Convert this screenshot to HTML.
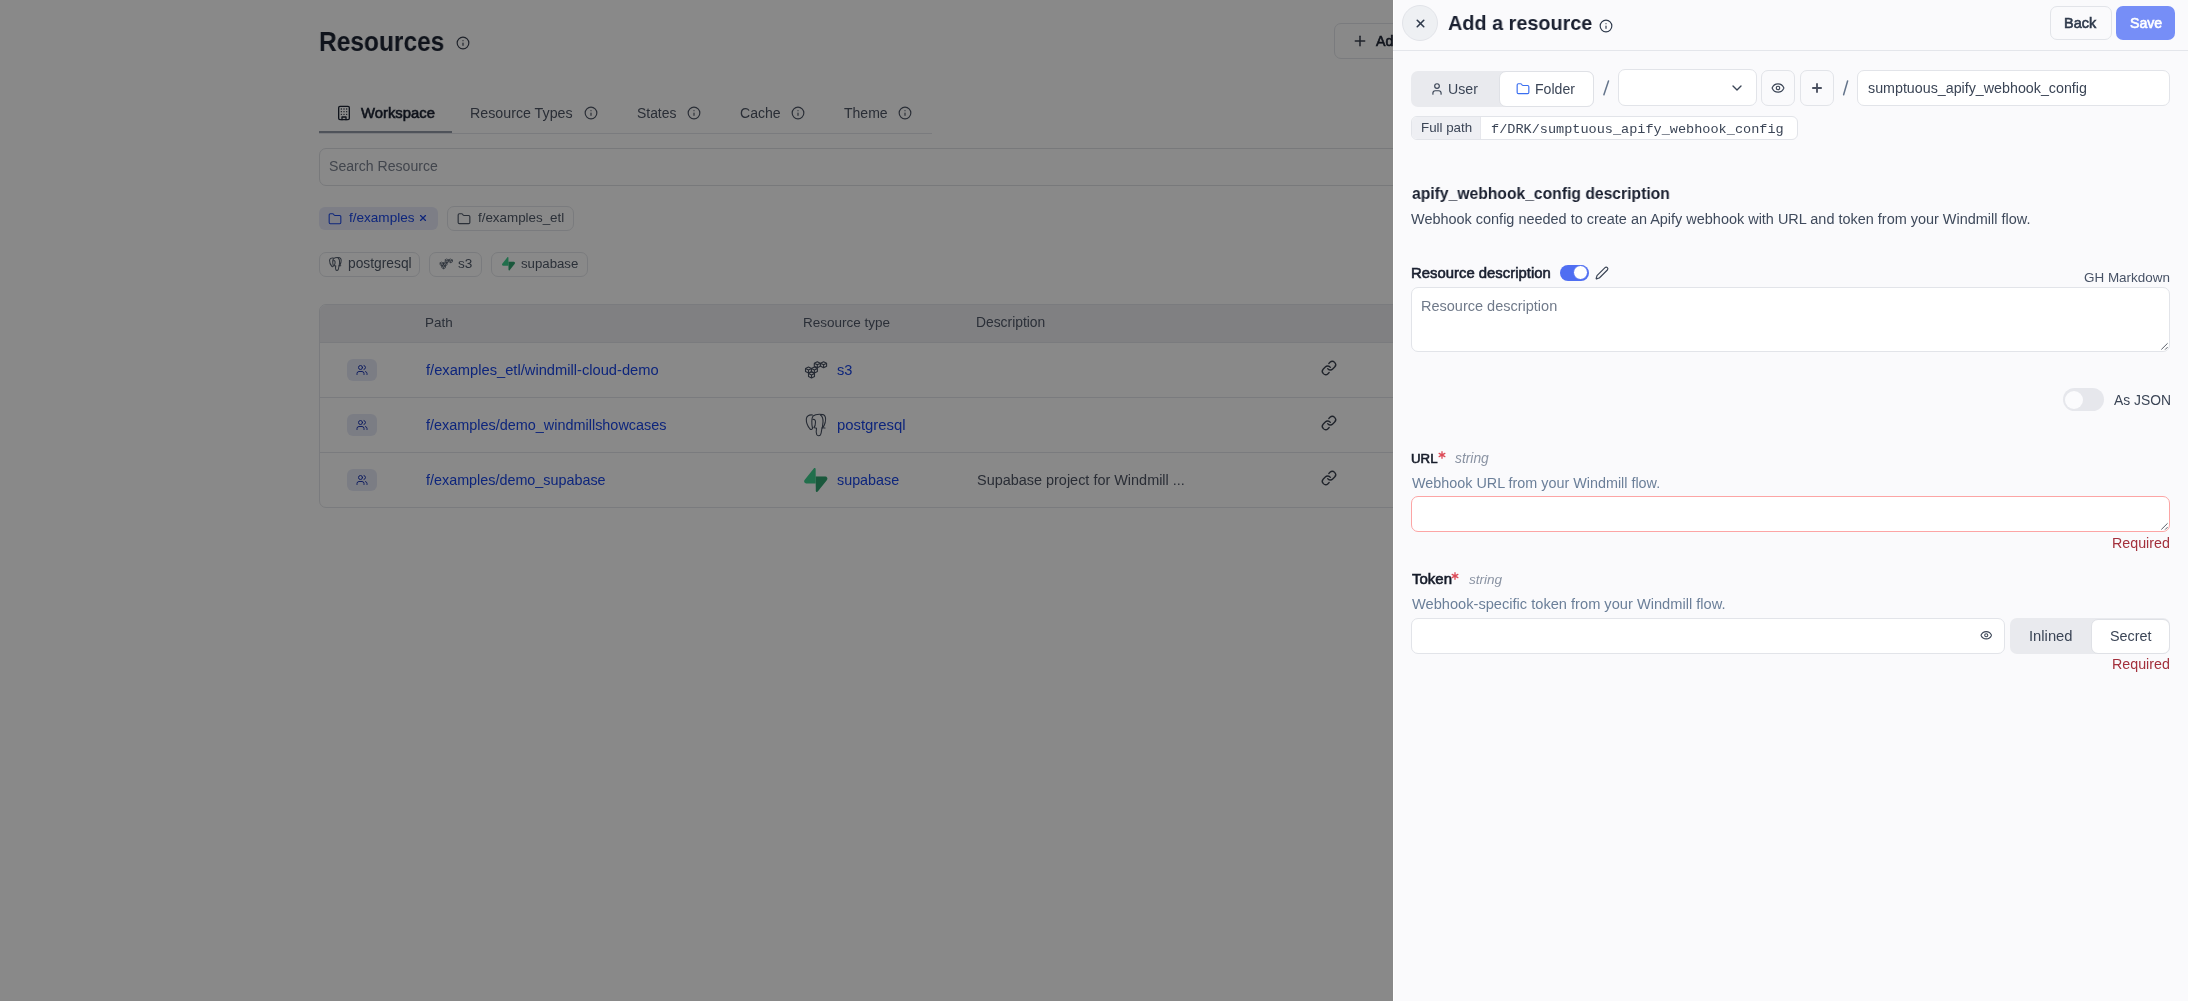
<!DOCTYPE html>
<html><head><meta charset="utf-8"><title>Resources</title>
<style>
html,body{margin:0;padding:0;}
body{width:2188px;height:1001px;overflow:hidden;position:relative;background:#ffffff;font-family:"Liberation Sans",sans-serif;}
.t{position:absolute;white-space:nowrap;line-height:1;will-change:transform;}
svg{display:block;overflow:visible}
</style></head><body>
<div class="t" style="left:319.22px;top:28.10px;font-family:'Liberation Sans';font-size:28px;font-weight:700;font-style:normal;color:#1d2433;transform:scaleX(0.8756);transform-origin:0 0;">Resources</div>
<svg style="position:absolute;left:456px;top:36px;" width="14" height="14" viewBox="0 0 24 24" fill="none" stroke="#3a4150" stroke-width="2" stroke-linecap="round" stroke-linejoin="round"><circle cx="12" cy="12" r="10"/><path d="M12 16v-4"/><path d="M12 8h.01"/></svg>
<div style="position:absolute;left:1334px;top:23px;width:200px;height:36px;background:#ffffff;border:1px solid #e4e6ea;border-radius:7px;box-sizing:border-box;"></div>
<svg style="position:absolute;left:1351.6px;top:32.6px;" width="16" height="16" viewBox="0 0 24 24" fill="none" stroke="#3a4150" stroke-width="2.3" stroke-linecap="round" stroke-linejoin="round"><path d="M5 12h14"/><path d="M12 5v14"/></svg>
<div class="t" style="left:1376.00px;top:34.00px;font-family:'Liberation Sans';font-size:14.2px;font-weight:400;font-style:normal;color:#1d2433;-webkit-text-stroke:0.6px #1d2433;">Add resource</div>
<div style="position:absolute;left:319px;top:133px;width:613px;height:1px;background:#e4e6ea;border-radius:0px;box-sizing:border-box;"></div>
<div style="position:absolute;left:319px;top:131px;width:133px;height:2px;background:#939aa8;border-radius:0px;box-sizing:border-box;"></div>
<svg style="position:absolute;left:336.3px;top:104.9px;" width="16" height="16" viewBox="0 0 24 24" fill="none" stroke="#1d2433" stroke-width="2" stroke-linecap="round" stroke-linejoin="round"><rect width="16" height="20" x="4" y="2" rx="2" ry="2"/><path d="M9 22v-4h6v4"/><path d="M8 6h.01"/><path d="M16 6h.01"/><path d="M12 6h.01"/><path d="M12 10h.01"/><path d="M12 14h.01"/><path d="M16 10h.01"/><path d="M16 14h.01"/><path d="M8 10h.01"/><path d="M8 14h.01"/></svg>
<div class="t" style="left:360.60px;top:106.00px;font-family:'Liberation Sans';font-size:14.84px;font-weight:400;font-style:normal;color:#1d2433;-webkit-text-stroke:0.6px #1d2433;">Workspace</div>
<div class="t" style="left:469.80px;top:106.00px;font-family:'Liberation Sans';font-size:14.24px;font-weight:400;font-style:normal;color:#4e5665;">Resource Types</div>
<svg style="position:absolute;left:584px;top:106px;" width="14" height="14" viewBox="0 0 24 24" fill="none" stroke="#4e5665" stroke-width="2" stroke-linecap="round" stroke-linejoin="round"><circle cx="12" cy="12" r="10"/><path d="M12 16v-4"/><path d="M12 8h.01"/></svg>
<div class="t" style="left:636.50px;top:107.00px;font-family:'Liberation Sans';font-size:13.92px;font-weight:400;font-style:normal;color:#4e5665;">States</div>
<svg style="position:absolute;left:687px;top:106px;" width="14" height="14" viewBox="0 0 24 24" fill="none" stroke="#4e5665" stroke-width="2" stroke-linecap="round" stroke-linejoin="round"><circle cx="12" cy="12" r="10"/><path d="M12 16v-4"/><path d="M12 8h.01"/></svg>
<div class="t" style="left:739.50px;top:106.00px;font-family:'Liberation Sans';font-size:14.08px;font-weight:400;font-style:normal;color:#4e5665;">Cache</div>
<svg style="position:absolute;left:791px;top:106px;" width="14" height="14" viewBox="0 0 24 24" fill="none" stroke="#4e5665" stroke-width="2" stroke-linecap="round" stroke-linejoin="round"><circle cx="12" cy="12" r="10"/><path d="M12 16v-4"/><path d="M12 8h.01"/></svg>
<div class="t" style="left:843.50px;top:106.00px;font-family:'Liberation Sans';font-size:14.04px;font-weight:400;font-style:normal;color:#4e5665;">Theme</div>
<svg style="position:absolute;left:898px;top:106px;" width="14" height="14" viewBox="0 0 24 24" fill="none" stroke="#4e5665" stroke-width="2" stroke-linecap="round" stroke-linejoin="round"><circle cx="12" cy="12" r="10"/><path d="M12 16v-4"/><path d="M12 8h.01"/></svg>
<div style="position:absolute;left:319px;top:148px;width:1560px;height:38px;background:#ffffff;border:1px solid #e0e2e6;border-radius:7px;box-sizing:border-box;"></div>
<div class="t" style="left:329.40px;top:159.00px;font-family:'Liberation Sans';font-size:14.08px;font-weight:400;font-style:normal;color:#7b8290;">Search Resource</div>
<div style="position:absolute;left:319px;top:207px;width:119px;height:23px;background:#e8ebfa;border-radius:6px;box-sizing:border-box;"></div>
<svg style="position:absolute;left:327.7px;top:212.4px;" width="14" height="14" viewBox="0 0 24 24" fill="none" stroke="#1a46e6" stroke-width="1.8" stroke-linecap="round" stroke-linejoin="round"><path d="M20 20a2 2 0 0 0 2-2V8a2 2 0 0 0-2-2h-7.9a2 2 0 0 1-1.69-.9L9.6 3.9A2 2 0 0 0 7.93 3H4a2 2 0 0 0-2 2v13a2 2 0 0 0 2 2Z"/></svg>
<div class="t" style="left:349.00px;top:211.20px;font-family:'Liberation Sans';font-size:13.55px;font-weight:400;font-style:normal;color:#1a46e6;">f/examples</div>
<svg style="position:absolute;left:418px;top:212.8px;" width="10" height="10" viewBox="0 0 24 24" fill="none" stroke="#1a46e6" stroke-width="2.8" stroke-linecap="round" stroke-linejoin="round"><path d="M18 6 6 18"/><path d="m6 6 12 12"/></svg>
<div style="position:absolute;left:447px;top:206px;width:127px;height:25px;background:#ffffff;border:1px solid #e4e6ea;border-radius:7px;box-sizing:border-box;"></div>
<svg style="position:absolute;left:457px;top:212.4px;" width="14" height="14" viewBox="0 0 24 24" fill="none" stroke="#505a69" stroke-width="2" stroke-linecap="round" stroke-linejoin="round"><path d="M20 20a2 2 0 0 0 2-2V8a2 2 0 0 0-2-2h-7.9a2 2 0 0 1-1.69-.9L9.6 3.9A2 2 0 0 0 7.93 3H4a2 2 0 0 0-2 2v13a2 2 0 0 0 2 2Z"/></svg>
<div class="t" style="left:478.00px;top:211.20px;font-family:'Liberation Sans';font-size:13.39px;font-weight:400;font-style:normal;color:#505a69;">f/examples_etl</div>
<div style="position:absolute;left:319px;top:252px;width:101px;height:25px;background:#ffffff;border:1px solid #e4e6ea;border-radius:7px;box-sizing:border-box;"></div>
<svg style="position:absolute;left:327.4px;top:254.6px;" width="16.8" height="16.8" viewBox="0 0 28 28" fill="none" stroke="#505a69" stroke-width="1.7" stroke-linecap="round" stroke-linejoin="round"><path d="M10.5 5 C7 4.5 4.5 6 4.3 9 C4.2 12.5 5.5 16 8 19 C9 20 10 19.5 10.5 18.5"/><path d="M10.5 18 C9.5 14 9.5 8 11 6 C13 4.5 17 4 21 4.6 C23.5 5.5 24 9 23.2 12.5 C22.5 15 21.5 17 20.5 18"/><path d="M14.5 18.5 C14 21 14.2 23.5 14.8 24.8 C15.6 26 17.5 26 18.5 24.8 C19.5 23 19.6 20 20 17.5"/><path d="M11 9.5 C12.5 9 13.5 10 13.5 12 C13.5 14.5 13 16.5 12 17.5 C11.5 18 13 17.5 14.5 18.3"/><path d="M18.5 5 C20.5 6.5 21.2 8.5 21 12 C20.8 14.5 20.3 16.5 20.5 17.8 L23 18"/></svg>
<div class="t" style="left:348.00px;top:256.60px;font-family:'Liberation Sans';font-size:13.8px;font-weight:400;font-style:normal;color:#505a69;">postgresql</div>
<div style="position:absolute;left:429px;top:252px;width:53px;height:25px;background:#ffffff;border:1px solid #e4e6ea;border-radius:7px;box-sizing:border-box;"></div>
<svg style="position:absolute;left:437.5px;top:257.1px;" width="16.5" height="12.9" viewBox="0 0 28 22" fill="none" stroke="#505a69" stroke-width="1.25" stroke-linecap="round" stroke-linejoin="round"><path d="M6.5 9.0 L9.5 10.5 L9.5 13.5 L6.5 15.0 L3.5 13.5 L3.5 10.5 Z M3.5 10.5 L6.5 12 L9.5 10.5 M6.5 12 L6.5 15.0"/><path d="M12.4 9.0 L15.4 10.5 L15.4 13.5 L12.4 15.0 L9.4 13.5 L9.4 10.5 Z M9.4 10.5 L12.4 12 L15.4 10.5 M12.4 12 L12.4 15.0"/><path d="M9.5 14.0 L12.5 15.5 L12.5 18.5 L9.5 20.0 L6.5 18.5 L6.5 15.5 Z M6.5 15.5 L9.5 17 L12.5 15.5 M9.5 17 L9.5 20.0"/><path d="M15.3 3.7 L18.3 5.2 L18.3 8.2 L15.3 9.7 L12.3 8.2 L12.3 5.2 Z M12.3 5.2 L15.3 6.7 L18.3 5.2 M15.3 6.7 L15.3 9.7"/><path d="M21.6 3.7 L24.6 5.2 L24.6 8.2 L21.6 9.7 L18.6 8.2 L18.6 5.2 Z M18.6 5.2 L21.6 6.7 L24.6 5.2 M21.6 6.7 L21.6 9.7"/></svg>
<div class="t" style="left:458.40px;top:256.60px;font-family:'Liberation Sans';font-size:13.6px;font-weight:400;font-style:normal;color:#505a69;">s3</div>
<div style="position:absolute;left:491px;top:252px;width:97px;height:25px;background:#ffffff;border:1px solid #e4e6ea;border-radius:7px;box-sizing:border-box;"></div>
<svg style="position:absolute;left:501.5px;top:257.3px;" width="13" height="13.5" viewBox="0 0 109 113" fill="none" stroke="#000" stroke-width="1" stroke-linecap="round" stroke-linejoin="round"><path fill="#3ECF8E" stroke="none" d="M63.7076 110.284C60.8481 113.885 55.0502 111.912 54.9813 107.314L53.9738 40.0627L99.1935 40.0627C107.384 40.0627 111.952 49.5228 106.859 55.9374L63.7076 110.284Z"/><path fill="#000" fill-opacity="0.2" stroke="none" d="M63.7076 110.284C60.8481 113.885 55.0502 111.912 54.9813 107.314L53.9738 40.0627L99.1935 40.0627C107.384 40.0627 111.952 49.5228 106.859 55.9374L63.7076 110.284Z"/><path fill="#3ECF8E" stroke="none" d="M45.317 2.07103C48.1765 -1.53037 53.9745 0.442937 54.0434 5.041L54.4849 72.2922H9.83113C1.64038 72.2922 -2.92775 62.8321 2.1655 56.4175L45.317 2.07103Z"/></svg>
<div class="t" style="left:520.70px;top:256.60px;font-family:'Liberation Sans';font-size:13.22px;font-weight:400;font-style:normal;color:#505a69;">supabase</div>
<div style="position:absolute;left:319px;top:304px;width:1560px;height:204px;background:#ffffff;border:1px solid #e4e6ea;border-radius:7px;box-sizing:border-box;"></div>
<div style="position:absolute;left:320px;top:305px;width:1558px;height:37px;background:#eeeff3;border-radius:0px;box-sizing:border-box;border-radius:6px 6px 0 0;"></div>
<div style="position:absolute;left:320.3px;top:342px;width:1558px;height:1px;background:#e4e6ea;border-radius:0px;box-sizing:border-box;"></div>
<div style="position:absolute;left:320.3px;top:397px;width:1558px;height:1px;background:#e4e6ea;border-radius:0px;box-sizing:border-box;"></div>
<div style="position:absolute;left:320.3px;top:452px;width:1558px;height:1px;background:#e4e6ea;border-radius:0px;box-sizing:border-box;"></div>
<div class="t" style="left:424.90px;top:316.40px;font-family:'Liberation Sans';font-size:13.43px;font-weight:400;font-style:normal;color:#505868;">Path</div>
<div class="t" style="left:803.20px;top:316.40px;font-family:'Liberation Sans';font-size:13.49px;font-weight:400;font-style:normal;color:#505868;">Resource type</div>
<div class="t" style="left:976.30px;top:316.40px;font-family:'Liberation Sans';font-size:13.85px;font-weight:400;font-style:normal;color:#505868;">Description</div>
<div style="position:absolute;left:347.2px;top:358.8px;width:29.8px;height:22.2px;background:#e6e9f6;border-radius:6px;box-sizing:border-box;"></div>
<svg style="position:absolute;left:356px;top:363.7px;" width="12" height="12" viewBox="0 0 24 24" fill="none" stroke="#1530b0" stroke-width="1.9" stroke-linecap="round" stroke-linejoin="round"><path d="M16 21v-2a4 4 0 0 0-4-4H6a4 4 0 0 0-4 4v2"/><circle cx="9" cy="7" r="4"/><path d="M22 21v-2a4 4 0 0 0-3-3.87"/><path d="M16 3.13a4 4 0 0 1 0 7.75"/></svg>
<div class="t" style="left:425.90px;top:362.70px;font-family:'Liberation Sans';font-size:14.69px;font-weight:400;font-style:normal;color:#1a46e6;">f/examples_etl/windmill-cloud-demo</div>
<div class="t" style="left:837.20px;top:362.70px;font-family:'Liberation Sans';font-size:14.6px;font-weight:400;font-style:normal;color:#1a46e6;">s3</div>
<svg style="position:absolute;left:1321px;top:359.7px;" width="16" height="16" viewBox="0 0 24 24" fill="none" stroke="#3a414f" stroke-width="2" stroke-linecap="round" stroke-linejoin="round"><path d="M10 13a5 5 0 0 0 7.54.54l3-3a5 5 0 0 0-7.07-7.07l-1.72 1.71"/><path d="M14 11a5 5 0 0 0-7.54-.54l-3 3a5 5 0 0 0 7.07 7.07l1.71-1.71"/></svg>
<div style="position:absolute;left:347.2px;top:413.8px;width:29.8px;height:22.2px;background:#e6e9f6;border-radius:6px;box-sizing:border-box;"></div>
<svg style="position:absolute;left:356px;top:418.7px;" width="12" height="12" viewBox="0 0 24 24" fill="none" stroke="#1530b0" stroke-width="1.9" stroke-linecap="round" stroke-linejoin="round"><path d="M16 21v-2a4 4 0 0 0-4-4H6a4 4 0 0 0-4 4v2"/><circle cx="9" cy="7" r="4"/><path d="M22 21v-2a4 4 0 0 0-3-3.87"/><path d="M16 3.13a4 4 0 0 1 0 7.75"/></svg>
<div class="t" style="left:425.90px;top:417.70px;font-family:'Liberation Sans';font-size:14.43px;font-weight:400;font-style:normal;color:#1a46e6;">f/examples/demo_windmillshowcases</div>
<div class="t" style="left:837.20px;top:417.70px;font-family:'Liberation Sans';font-size:14.87px;font-weight:400;font-style:normal;color:#1a46e6;">postgresql</div>
<svg style="position:absolute;left:1321px;top:414.7px;" width="16" height="16" viewBox="0 0 24 24" fill="none" stroke="#3a414f" stroke-width="2" stroke-linecap="round" stroke-linejoin="round"><path d="M10 13a5 5 0 0 0 7.54.54l3-3a5 5 0 0 0-7.07-7.07l-1.72 1.71"/><path d="M14 11a5 5 0 0 0-7.54-.54l-3 3a5 5 0 0 0 7.07 7.07l1.71-1.71"/></svg>
<div style="position:absolute;left:347.2px;top:468.8px;width:29.8px;height:22.2px;background:#e6e9f6;border-radius:6px;box-sizing:border-box;"></div>
<svg style="position:absolute;left:356px;top:473.7px;" width="12" height="12" viewBox="0 0 24 24" fill="none" stroke="#1530b0" stroke-width="1.9" stroke-linecap="round" stroke-linejoin="round"><path d="M16 21v-2a4 4 0 0 0-4-4H6a4 4 0 0 0-4 4v2"/><circle cx="9" cy="7" r="4"/><path d="M22 21v-2a4 4 0 0 0-3-3.87"/><path d="M16 3.13a4 4 0 0 1 0 7.75"/></svg>
<div class="t" style="left:425.90px;top:472.70px;font-family:'Liberation Sans';font-size:14.36px;font-weight:400;font-style:normal;color:#1a46e6;">f/examples/demo_supabase</div>
<div class="t" style="left:837.20px;top:472.70px;font-family:'Liberation Sans';font-size:14.34px;font-weight:400;font-style:normal;color:#1a46e6;">supabase</div>
<div class="t" style="left:977.40px;top:472.70px;font-family:'Liberation Sans';font-size:14.45px;font-weight:400;font-style:normal;color:#4e5564;">Supabase project for Windmill ...</div>
<svg style="position:absolute;left:1321px;top:469.7px;" width="16" height="16" viewBox="0 0 24 24" fill="none" stroke="#3a414f" stroke-width="2" stroke-linecap="round" stroke-linejoin="round"><path d="M10 13a5 5 0 0 0 7.54.54l3-3a5 5 0 0 0-7.07-7.07l-1.72 1.71"/><path d="M14 11a5 5 0 0 0-7.54-.54l-3 3a5 5 0 0 0 7.07 7.07l1.71-1.71"/></svg>
<svg style="position:absolute;left:802px;top:358px;" width="28" height="22" viewBox="0 0 28 22" fill="none" stroke="#475061" stroke-width="1.1" stroke-linecap="round" stroke-linejoin="round"><path d="M6.5 9.0 L9.5 10.5 L9.5 13.5 L6.5 15.0 L3.5 13.5 L3.5 10.5 Z M3.5 10.5 L6.5 12 L9.5 10.5 M6.5 12 L6.5 15.0"/><path d="M12.4 9.0 L15.4 10.5 L15.4 13.5 L12.4 15.0 L9.4 13.5 L9.4 10.5 Z M9.4 10.5 L12.4 12 L15.4 10.5 M12.4 12 L12.4 15.0"/><path d="M9.5 14.0 L12.5 15.5 L12.5 18.5 L9.5 20.0 L6.5 18.5 L6.5 15.5 Z M6.5 15.5 L9.5 17 L12.5 15.5 M9.5 17 L9.5 20.0"/><path d="M15.3 3.7 L18.3 5.2 L18.3 8.2 L15.3 9.7 L12.3 8.2 L12.3 5.2 Z M12.3 5.2 L15.3 6.7 L18.3 5.2 M15.3 6.7 L15.3 9.7"/><path d="M21.6 3.7 L24.6 5.2 L24.6 8.2 L21.6 9.7 L18.6 8.2 L18.6 5.2 Z M18.6 5.2 L21.6 6.7 L24.6 5.2 M21.6 6.7 L21.6 9.7"/></svg>
<svg style="position:absolute;left:802px;top:410px;" width="28" height="28" viewBox="0 0 28 28" fill="none" stroke="#475061" stroke-width="1.1" stroke-linecap="round" stroke-linejoin="round"><path d="M10.5 5 C7 4.5 4.5 6 4.3 9 C4.2 12.5 5.5 16 8 19 C9 20 10 19.5 10.5 18.5"/><path d="M10.5 18 C9.5 14 9.5 8 11 6 C13 4.5 17 4 21 4.6 C23.5 5.5 24 9 23.2 12.5 C22.5 15 21.5 17 20.5 18"/><path d="M14.5 18.5 C14 21 14.2 23.5 14.8 24.8 C15.6 26 17.5 26 18.5 24.8 C19.5 23 19.6 20 20 17.5"/><path d="M11 9.5 C12.5 9 13.5 10 13.5 12 C13.5 14.5 13 16.5 12 17.5 C11.5 18 13 17.5 14.5 18.3"/><path d="M18.5 5 C20.5 6.5 21.2 8.5 21 12 C20.8 14.5 20.3 16.5 20.5 17.8 L23 18"/></svg>
<svg style="position:absolute;left:804.3px;top:467.8px;" width="23.5" height="24.2" viewBox="0 0 109 113" fill="none" stroke="#000" stroke-width="1" stroke-linecap="round" stroke-linejoin="round"><path fill="#3ECF8E" stroke="none" d="M63.7076 110.284C60.8481 113.885 55.0502 111.912 54.9813 107.314L53.9738 40.0627L99.1935 40.0627C107.384 40.0627 111.952 49.5228 106.859 55.9374L63.7076 110.284Z"/><path fill="#000" fill-opacity="0.2" stroke="none" d="M63.7076 110.284C60.8481 113.885 55.0502 111.912 54.9813 107.314L53.9738 40.0627L99.1935 40.0627C107.384 40.0627 111.952 49.5228 106.859 55.9374L63.7076 110.284Z"/><path fill="#3ECF8E" stroke="none" d="M45.317 2.07103C48.1765 -1.53037 53.9745 0.442937 54.0434 5.041L54.4849 72.2922H9.83113C1.64038 72.2922 -2.92775 62.8321 2.1655 56.4175L45.317 2.07103Z"/></svg>
<div style="position:absolute;left:0;top:0;width:2188px;height:1001px;background:rgba(0,0,0,0.463)"></div>
<div style="position:absolute;left:1393px;top:0px;width:795px;height:1001px;background:#fafafc;border-radius:0px;box-sizing:border-box;"></div>
<div style="position:absolute;left:1393px;top:0px;width:1px;height:1001px;background:#ffffff;border-radius:0px;box-sizing:border-box;"></div>
<div style="position:absolute;left:1393px;top:50px;width:795px;height:1px;background:#e4e6eb;border-radius:0px;box-sizing:border-box;"></div>
<div style="position:absolute;left:1402px;top:4.9px;width:36px;height:36px;background:#eef0f3;border:1px solid #e2e4e9;border-radius:18px;box-sizing:border-box;"></div>
<svg style="position:absolute;left:1414px;top:16.85px;" width="13" height="13" viewBox="0 0 24 24" fill="none" stroke="#2f3a4c" stroke-width="3.0" stroke-linecap="round" stroke-linejoin="round"><path d="M18 6 6 18"/><path d="m6 6 12 12"/></svg>
<div class="t" style="left:1447.50px;top:12.80px;font-family:'Liberation Sans';font-size:20.8px;font-weight:700;font-style:normal;color:#1a2030;transform:scaleX(0.9533);transform-origin:0 0;">Add a resource</div>
<svg style="position:absolute;left:1599px;top:19px;" width="14" height="14" viewBox="0 0 24 24" fill="none" stroke="#2f3a4c" stroke-width="2" stroke-linecap="round" stroke-linejoin="round"><circle cx="12" cy="12" r="10"/><path d="M12 16v-4"/><path d="M12 8h.01"/></svg>
<div style="position:absolute;left:2050.3px;top:6.2px;width:61.4px;height:33.4px;background:#fafafc;border:1px solid #e2e4e9;border-radius:7px;box-sizing:border-box;"></div>
<div class="t" style="left:2064.40px;top:16.10px;font-family:'Liberation Sans';font-size:14.49px;font-weight:400;font-style:normal;color:#2f3a4c;-webkit-text-stroke:0.6px #2f3a4c;">Back</div>
<div style="position:absolute;left:2116px;top:6px;width:59px;height:34px;background:#768ef7;border-radius:7px;box-sizing:border-box;"></div>
<div class="t" style="left:2129.90px;top:16.10px;font-family:'Liberation Sans';font-size:14.12px;font-weight:400;font-style:normal;color:#ffffff;-webkit-text-stroke:0.6px #ffffff;">Save</div>
<div style="position:absolute;left:1411px;top:71px;width:183px;height:36px;background:#e9eaee;border-radius:7px;box-sizing:border-box;"></div>
<div style="position:absolute;left:1499px;top:71px;width:95px;height:36px;background:#ffffff;border:1px solid #dfe1e6;border-radius:7px;box-sizing:border-box;"></div>
<svg style="position:absolute;left:1429.5px;top:81.8px;" width="14" height="14" viewBox="0 0 24 24" fill="none" stroke="#3b4556" stroke-width="2" stroke-linecap="round" stroke-linejoin="round"><path d="M19 21v-2a4 4 0 0 0-4-4H9a4 4 0 0 0-4 4v2"/><circle cx="12" cy="7" r="4"/></svg>
<div class="t" style="left:1448.40px;top:82.00px;font-family:'Liberation Sans';font-size:14.15px;font-weight:400;font-style:normal;color:#3b4556;">User</div>
<svg style="position:absolute;left:1516.4px;top:81.8px;" width="14" height="14" viewBox="0 0 24 24" fill="none" stroke="#3b6ff0" stroke-width="2" stroke-linecap="round" stroke-linejoin="round"><path d="M20 20a2 2 0 0 0 2-2V8a2 2 0 0 0-2-2h-7.9a2 2 0 0 1-1.69-.9L9.6 3.9A2 2 0 0 0 7.93 3H4a2 2 0 0 0-2 2v13a2 2 0 0 0 2 2Z"/></svg>
<div class="t" style="left:1535.00px;top:82.00px;font-family:'Liberation Sans';font-size:14.08px;font-weight:400;font-style:normal;color:#3b4556;">Folder</div>
<svg style="position:absolute;left:1600px;top:79px" width="12" height="18" viewBox="0 0 12 18"><path d="M8.5 2 L3.9 15.7" stroke="#64748b" stroke-width="1.5" stroke-linecap="round"/></svg>
<div style="position:absolute;left:1618px;top:69px;width:139px;height:37px;background:#ffffff;border:1px solid #e2e4e9;border-radius:7px;box-sizing:border-box;"></div>
<svg style="position:absolute;left:1728.8px;top:80px;" width="16" height="16" viewBox="0 0 24 24" fill="none" stroke="#3b4556" stroke-width="2" stroke-linecap="round" stroke-linejoin="round"><path d="m6 9 6 6 6-6"/></svg>
<div style="position:absolute;left:1761px;top:70px;width:34px;height:36px;background:#fafafc;border:1px solid #e2e4e9;border-radius:7px;box-sizing:border-box;"></div>
<svg style="position:absolute;left:1771px;top:81px;" width="14" height="14" viewBox="0 0 24 24" fill="none" stroke="#3b4556" stroke-width="2" stroke-linecap="round" stroke-linejoin="round"><path d="M2.062 12.348a1 1 0 0 1 0-.696 10.75 10.75 0 0 1 19.876 0 1 1 0 0 1 0 .696 10.75 10.75 0 0 1-19.876 0"/><circle cx="12" cy="12" r="3"/></svg>
<div style="position:absolute;left:1800px;top:70px;width:34px;height:36px;background:#fafafc;border:1px solid #e2e4e9;border-radius:7px;box-sizing:border-box;"></div>
<svg style="position:absolute;left:1809.9px;top:81px;" width="14" height="14" viewBox="0 0 24 24" fill="none" stroke="#4a5060" stroke-width="3.2" stroke-linecap="round" stroke-linejoin="round"><path d="M5 12h14"/><path d="M12 5v14"/></svg>
<svg style="position:absolute;left:1840px;top:79px" width="12" height="18" viewBox="0 0 12 18"><path d="M7.6 2 L3.6 15.8" stroke="#64748b" stroke-width="1.5" stroke-linecap="round"/></svg>
<div style="position:absolute;left:1857px;top:70px;width:313px;height:36px;background:#ffffff;border:1px solid #e2e4e9;border-radius:7px;box-sizing:border-box;"></div>
<div class="t" style="left:1868.00px;top:81.20px;font-family:'Liberation Sans';font-size:14.28px;font-weight:400;font-style:normal;color:#3b4556;">sumptuous_apify_webhook_config</div>
<div style="position:absolute;left:1411px;top:116px;width:387px;height:24px;background:#ffffff;border:1px solid #e2e4e9;border-radius:6px;box-sizing:border-box;"></div>
<div style="position:absolute;left:1412px;top:117px;width:68px;height:22px;background:#eeeff3;border-radius:0px;box-sizing:border-box;border-radius:5px 0 0 5px;"></div>
<div style="position:absolute;left:1480px;top:117px;width:1px;height:22px;background:#e6e7ec;border-radius:0px;box-sizing:border-box;"></div>
<div class="t" style="left:1420.90px;top:120.80px;font-family:'Liberation Sans';font-size:13.33px;font-weight:400;font-style:normal;color:#3b4556;">Full path</div>
<div class="t" style="left:1491.00px;top:122.60px;font-family:'Liberation Mono';font-size:13.56px;font-weight:400;font-style:normal;color:#3b4556;">f/DRK/sumptuous_apify_webhook_config</div>
<div class="t" style="left:1411.70px;top:184.90px;font-family:'Liberation Sans';font-size:16.5px;font-weight:700;font-style:normal;color:#1a2030;transform:scaleX(0.9499);transform-origin:0 0;">apify_webhook_config description</div>
<div class="t" style="left:1411.00px;top:212.00px;font-family:'Liberation Sans';font-size:14.46px;font-weight:400;font-style:normal;color:#3f4a5c;">Webhook config needed to create an Apify webhook with URL and token from your Windmill flow.</div>
<div class="t" style="left:1410.50px;top:265.90px;font-family:'Liberation Sans';font-size:14.89px;font-weight:400;font-style:normal;color:#1a2030;-webkit-text-stroke:0.6px #1a2030;">Resource description</div>
<div style="position:absolute;left:1560px;top:265px;width:29px;height:16px;background:#4f6ef2;border-radius:8px;box-sizing:border-box;"></div>
<div style="position:absolute;left:1573.3px;top:264.8px;width:15px;height:15px;background:#ffffff;border:1px solid #4f6ef2;border-radius:8px;box-sizing:border-box;"></div>
<svg style="position:absolute;left:1595.4px;top:265.5px;" width="14" height="14" viewBox="0 0 24 24" fill="none" stroke="#3b4556" stroke-width="2" stroke-linecap="round" stroke-linejoin="round"><path d="M21.174 6.812a1 1 0 0 0-3.986-3.987L3.842 16.174a2 2 0 0 0-.5.83l-1.321 4.352a.5.5 0 0 0 .623.622l4.353-1.32a2 2 0 0 0 .83-.497z"/></svg>
<div class="t" style="left:2084.20px;top:271.30px;font-family:'Liberation Sans';font-size:13.45px;font-weight:400;font-style:normal;color:#475266;">GH Markdown</div>
<div style="position:absolute;left:1411px;top:287px;width:759px;height:65px;background:#ffffff;border:1px solid #e2e4e9;border-radius:7px;box-sizing:border-box;"></div>
<div class="t" style="left:1420.80px;top:298.80px;font-family:'Liberation Sans';font-size:14.5px;font-weight:400;font-style:normal;color:#707a8a;">Resource description</div>
<svg style="position:absolute;left:2160px;top:342px" width="9" height="9" viewBox="0 0 9 9" stroke="#5a5f6a" stroke-width="1" fill="none"><path d="M1.3 7.5 L7.6 1.3 M5.1 7.6 L7.6 5.1"/></svg>
<div style="position:absolute;left:2063px;top:387.7px;width:41px;height:23.5px;background:#e6e7ec;border-radius:12px;box-sizing:border-box;"></div>
<div style="position:absolute;left:2065px;top:390.6px;width:18px;height:18px;border-radius:9px;background:#fbfbfd"></div>
<div class="t" style="left:2113.62px;top:394.20px;font-family:'Liberation Sans';font-size:13.86px;font-weight:400;font-style:normal;color:#3b4556;">As JSON</div>
<div class="t" style="left:1410.75px;top:451.75px;font-family:'Liberation Sans';font-size:13.26px;font-weight:400;font-style:normal;color:#161c2a;-webkit-text-stroke:0.6px #161c2a;">URL</div>
<svg style="position:absolute;left:1436.5px;top:449.6px" width="10" height="10" viewBox="0 0 10 10"><path d="M5.00 1.70 L5.00 8.30 M2.14 3.35 L7.86 6.65 M7.86 3.35 L2.14 6.65 " stroke="#dc4a57" stroke-width="1.3" stroke-linecap="round"/></svg>
<div class="t" style="left:1455.25px;top:451.75px;font-family:'Liberation Sans';font-size:13.84px;font-weight:400;font-style:italic;color:#8a93a3;">string</div>
<div class="t" style="left:1411.50px;top:475.90px;font-family:'Liberation Sans';font-size:14.36px;font-weight:400;font-style:normal;color:#6b7f99;">Webhook URL from your Windmill flow.</div>
<div style="position:absolute;left:1411px;top:496px;width:759px;height:36px;background:#ffffff;border:1px solid #fca5a5;border-radius:7px;box-sizing:border-box;"></div>
<svg style="position:absolute;left:2160px;top:522px" width="9" height="9" viewBox="0 0 9 9" stroke="#5a5f6a" stroke-width="1" fill="none"><path d="M1.3 7.5 L7.6 1.3 M5.1 7.6 L7.6 5.1"/></svg>
<div class="t" style="left:2111.64px;top:536.20px;font-family:'Liberation Sans';font-size:14.28px;font-weight:400;font-style:normal;color:#a3303c;">Required</div>
<div class="t" style="left:1411.50px;top:570.90px;font-family:'Liberation Sans';font-size:15.01px;font-weight:400;font-style:normal;color:#161c2a;-webkit-text-stroke:0.6px #161c2a;">Token</div>
<svg style="position:absolute;left:1449.6px;top:570.8px" width="10" height="10" viewBox="0 0 10 10"><path d="M5.00 1.70 L5.00 8.30 M2.14 3.35 L7.86 6.65 M7.86 3.35 L2.14 6.65 " stroke="#dc4a57" stroke-width="1.3" stroke-linecap="round"/></svg>
<div class="t" style="left:1468.80px;top:572.90px;font-family:'Liberation Sans';font-size:13.57px;font-weight:400;font-style:italic;color:#8a93a3;">string</div>
<div class="t" style="left:1411.50px;top:597.00px;font-family:'Liberation Sans';font-size:14.63px;font-weight:400;font-style:normal;color:#6b7f99;">Webhook-specific token from your Windmill flow.</div>
<div style="position:absolute;left:1411px;top:618px;width:594px;height:36px;background:#ffffff;border:1px solid #e2e4e9;border-radius:7px;box-sizing:border-box;"></div>
<svg style="position:absolute;left:1979.5px;top:629.3px;" width="12.5" height="12.5" viewBox="0 0 24 24" fill="none" stroke="#3b4556" stroke-width="2" stroke-linecap="round" stroke-linejoin="round"><path d="M2.062 12.348a1 1 0 0 1 0-.696 10.75 10.75 0 0 1 19.876 0 1 1 0 0 1 0 .696 10.75 10.75 0 0 1-19.876 0"/><circle cx="12" cy="12" r="3"/></svg>
<div style="position:absolute;left:2010px;top:618px;width:160px;height:36px;background:#e9eaee;border-radius:7px;box-sizing:border-box;"></div>
<div style="position:absolute;left:2091px;top:619px;width:79px;height:35px;background:#ffffff;border:1px solid #dfe1e6;border-radius:7px;box-sizing:border-box;"></div>
<div class="t" style="left:2028.60px;top:629.00px;font-family:'Liberation Sans';font-size:14.78px;font-weight:400;font-style:normal;color:#3b4556;">Inlined</div>
<div class="t" style="left:2109.80px;top:629.00px;font-family:'Liberation Sans';font-size:14.34px;font-weight:400;font-style:normal;color:#3b4556;">Secret</div>
<div class="t" style="left:2111.64px;top:656.80px;font-family:'Liberation Sans';font-size:14.28px;font-weight:400;font-style:normal;color:#a3303c;">Required</div>
</body></html>
